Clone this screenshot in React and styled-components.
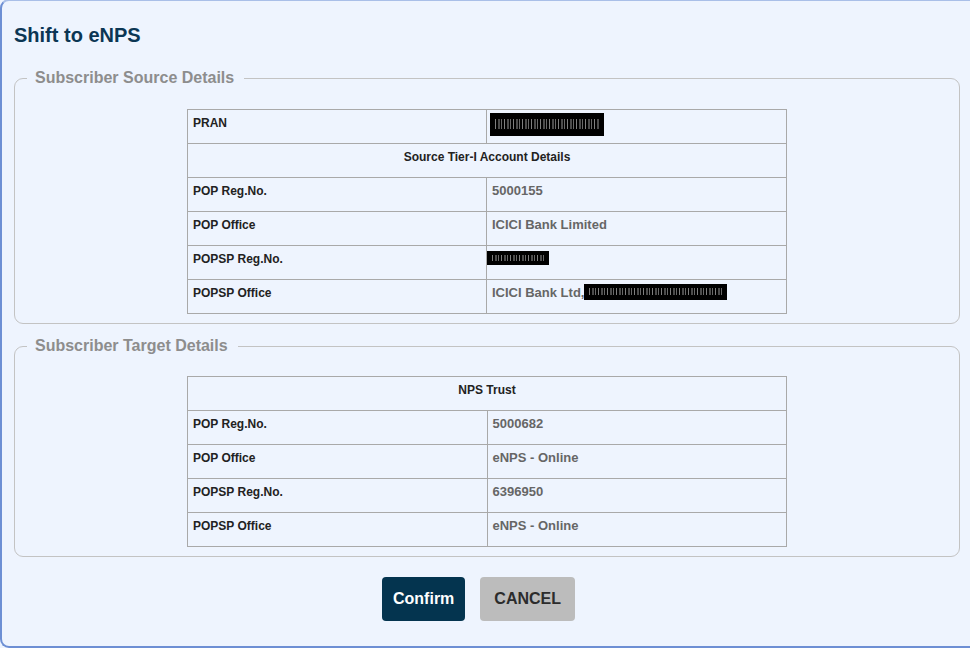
import React from 'react'
import styled, { createGlobalStyle } from 'styled-components'

const GlobalStyle = createGlobalStyle`
  html, body {
    margin: 0;
    padding: 0;
    background: #eef4fe;
    overflow: hidden;
  }
  body {
    font-family: "Liberation Sans", Arial, sans-serif;
  }
`

const sourceRows = [
  { label: 'POP Reg.No.', value: '5000155' },
  { label: 'POP Office', value: 'ICICI Bank Limited' },
  { label: 'POPSP Reg.No.', masked: 'reg' },
  { label: 'POPSP Office', value: 'ICICI Bank Ltd,', masked: 'office' },
]

const targetRows = [
  { label: 'POP Reg.No.', value: '5000682' },
  { label: 'POP Office', value: 'eNPS - Online' },
  { label: 'POPSP Reg.No.', value: '6396950' },
  { label: 'POPSP Office', value: 'eNPS - Online' },
]

const App = () => {
  return (
    <>
      <GlobalStyle />
      <Dialog>
        <Title>Shift to eNPS</Title>

        <Section>
          <Legend>Subscriber Source Details</Legend>
          <Table>
            <tbody>
              <tr>
                <Label>PRAN</Label>
                <Value>
                  <Masked $w={114} $h={23} $top={-3} $left={-2} aria-hidden="true" />
                </Value>
              </tr>
              <tr>
                <Heading colSpan={2}>Source Tier-I Account Details</Heading>
              </tr>
              {sourceRows.map((row) => (
                <tr key={row.label}>
                  <Label>{row.label}</Label>
                  <Value>
                    {row.value}
                    {row.masked === 'reg' && (
                      <Masked $w={62} $h={14} $top={-1} $left={-5} aria-hidden="true" />
                    )}
                    {row.masked === 'office' && (
                      <Masked $w={143} $h={16} $top={-2} $left={0} aria-hidden="true" />
                    )}
                  </Value>
                </tr>
              ))}
            </tbody>
          </Table>
        </Section>

        <Section $gap>
          <Legend>Subscriber Target Details</Legend>
          <Table>
            <tbody>
              <tr>
                <Heading colSpan={2}>NPS Trust</Heading>
              </tr>
              {targetRows.map((row) => (
                <tr key={row.label}>
                  <Label>{row.label}</Label>
                  <Value>{row.value}</Value>
                </tr>
              ))}
            </tbody>
          </Table>
        </Section>

        <Actions>
          <Button $primary $pad={11}>Confirm</Button>
          <Button $pad={14}>CANCEL</Button>
        </Actions>
      </Dialog>
    </>
  )
}

const Dialog = styled.div`
  box-sizing: border-box;
  width: 990px;
  height: 649px;
  margin-top: -1px;
  padding: 0 30px 0 12px;
  border: 2px solid #6d8fd4;
  border-right: none;
  border-top-color: #a9bfe8;
  border-radius: 9px 0 0 9px;
  background: #eef4fe;
`
const Title = styled.h1`
  margin: 22px 0 0 0;
  font-size: 20px;
  line-height: 24px;
  font-weight: bold;
  color: #0b3654;
`
const Section = styled.fieldset`
  margin: ${(props) => (props.$gap ? '13px' : '22px')} 0 0 0;
  padding: ${(props) => (props.$gap ? '21px' : '22px')} 12px 9px;
  border: 1px solid #c3c3c3;
  border-radius: 9px;
  min-width: 0;
`
const Legend = styled.legend`
  padding: 0 10px 0 8px;
  font-size: 16px;
  line-height: 18px;
  font-weight: bold;
  color: #8d8d8d;
`
const Table = styled.table`
  width: 600px;
  margin: 0 auto;
  border-collapse: collapse;
  table-layout: fixed;
  tr {
    height: 34px;
  }
`
const Cell = styled.td`
  box-sizing: border-box;
  border: 1px solid #a9a9a9;
  padding: 6px 5px 0;
  vertical-align: top;
  line-height: 14px;
  font-weight: bold;
`
const Label = styled(Cell)`
  width: 299px;
  font-size: 12px;
  color: #222222;
`
const Value = styled(Cell)`
  font-size: 13px;
  color: #666666;
  white-space: nowrap;
`
const Heading = styled(Cell)`
  text-align: center;
  font-size: 12px;
  color: #222222;
`
const Masked = styled.span`
  display: inline-block;
  vertical-align: top;
  width: ${(props) => props.$w}px;
  height: ${(props) => props.$h}px;
  margin: ${(props) => props.$top}px 0 ${(props) => 14 - props.$h - props.$top}px ${(props) => props.$left}px;
  background-color: #000;
  background-image:
    repeating-linear-gradient(
      90deg,
      rgba(210, 210, 210, 0.6) 0 1px,
      transparent 1px 3px,
      rgba(150, 150, 150, 0.5) 3px 5px,
      transparent 5px 6px,
      rgba(230, 230, 230, 0.45) 6px 7px,
      transparent 7px 9px
    ),
    repeating-linear-gradient(
      0deg,
      transparent 0 1px,
      rgba(0, 0, 0, 0.7) 1px 2px
    );
  background-size: calc(100% - 10px) 45%, calc(100% - 10px) 45%;
  background-position: center, center;
  background-repeat: no-repeat;
`
const Actions = styled.div`
  display: flex;
  justify-content: center;
  gap: 15px;
  margin-top: 20px;
  padding-right: 17px;
`
const Button = styled.button`
  all: unset;
  box-sizing: border-box;
  height: 44px;
  padding: 0 ${(props) => props.$pad}px;
  border-radius: 4px;
  font-family: "Liberation Sans", Arial, sans-serif;
  font-size: 16px;
  font-weight: bold;
  line-height: 44px;
  color: ${(props) => (props.$primary ? '#ffffff' : '#2c2c2c')};
  background: ${(props) => (props.$primary ? '#04344f' : '#bcbcbc')};
`

export default App
